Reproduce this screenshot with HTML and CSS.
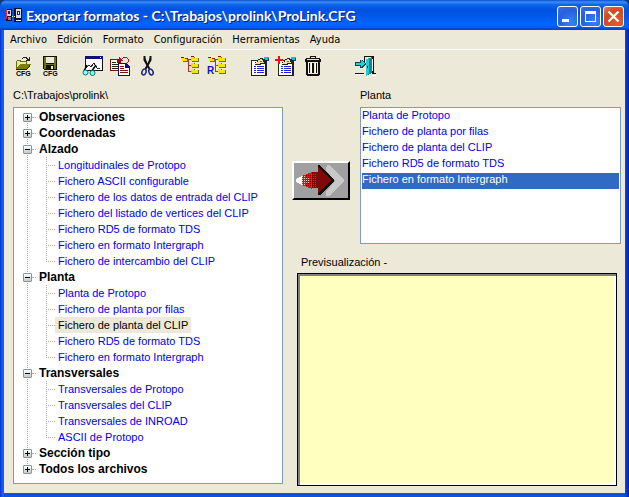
FILE: index.html
```html
<!DOCTYPE html>
<html lang="es">
<head>
<meta charset="utf-8">
<title>Exportar formatos</title>
<link rel="stylesheet" href="styles.css">
</head>
<body>
<div class="window">
  <header class="titlebar">
    <svg class="app-icon" width="16" height="16" viewBox="0 0 16 16" shape-rendering="crispEdges" aria-hidden="true">
      <path fill="#101030" d="M0 1h6v12H0zM8 0h8v14H8z"/><path fill="#d8d8e0" d="M1 2h4v6H1zM10 1h5v9h-5z"/><path fill="#20205c" d="M2 3h2v3H2zM11 3h3v4h-3z"/><path fill="#888" d="M2 9h3v3H2z"/><path fill="#f22" d="M0 1h1v10H0z"/><path fill="#fff" d="M6 8h1v1H6zM8 8h1v1H8zM10 12h5v1h-5zM12 4h1v2h-1z"/>
    </svg>
    <h1 class="title">Exportar formatos - C:\Trabajos\prolink\ProLink.CFG</h1>
    <div class="window-buttons">
      <button class="window-button" type="button" aria-label="Minimizar"><svg width="19" height="19" viewBox="0 0 19 19"><path fill="#fff" d="M4 12h7v3H4z"/></svg></button>
      <button class="window-button" type="button" aria-label="Maximizar"><svg width="19" height="19" viewBox="0 0 19 19"><path fill="#fff" fill-rule="evenodd" d="M4 4h11v11H4zM5 7v7h9V7z"/></svg></button>
      <button class="window-button window-button-close" type="button" aria-label="Cerrar"><svg width="19" height="19" viewBox="0 0 19 19"><path stroke="#fff" stroke-width="2.2" d="M4.500 4.500l10 10M14.500 4.500l-10 10"/></svg></button>
    </div>
  </header>

  <nav class="menubar">
    <button type="button">Archivo</button><button type="button">Edición</button><button type="button">Formato</button><button type="button">Configuración</button><button type="button">Herramientas</button><button type="button">Ayuda</button>
  </nav>

  <div class="toolbar">
    <div class="tool-group">
      <button class="tool" type="button" aria-label="Abrir configuración"><svg width="27" height="22" viewBox="0 0 27 22" shape-rendering="crispEdges">
        <path fill="#6b6b10" d="M6 6h1V5h4v1h6v3H6z"/><path fill="#e8e8a0" d="M7 6h3v1h6v2h-5l-4 4z"/><path fill="#6b6b10" d="M6 6h1v8H6z"/><path fill="#7c7c10" d="M10 9h11l-4 5H6z"/><path fill="#222200" d="M6 14h11v1H6zM17 13h1v1h-1zM18 12h1v1h-1zM19 10h1v2h-1z"/><path fill="#222" d="M12 3h1V2h4v1h1v1h1V2h1v4h-4V5h1V4h-1V3h-3v1h-1z"/>
        <text class="icon-text" x="6" y="21">CFG</text></svg></button>
      <button class="tool" type="button" aria-label="Guardar configuración"><svg width="27" height="22" viewBox="0 0 27 22" shape-rendering="crispEdges">
        <path fill="#111100" d="M6 1h14v14H7l-1-1z"/><path fill="#6f6f18" d="M7 2h2v7h8V2h2v12H7z"/><path fill="#ece9d8" d="M9 2h8v6H9z"/><path fill="#111" d="M9 10h8v4H9z"/><path fill="#ece9d8" d="M14 11h2v3h-2z"/>
        <text class="icon-text" x="6" y="21">CFG</text></svg></button>
    </div>
    <div class="tool-group">
      <button class="tool" type="button" aria-label="Previsualizar"><svg width="27" height="22" viewBox="0 0 27 22" shape-rendering="crispEdges">
        <path fill="#111" d="M5 1h18v15H5z"/><path fill="#fff" d="M6 4h16v11H6z"/><path fill="#10107c" d="M5 1h18v3H5z"/><path fill="#fff" d="M20 2h1v1h-1z"/><path fill="none" stroke="#222" d="M6 13l3-3 2 2 3-4 3 5 3 1"/><g shape-rendering="auto"><path fill="none" stroke="#000" stroke-width="1.500" d="M4 16l3-6M11 17l5-7"/><circle cx="5.500" cy="17.500" r="2.500" fill="#8ff" stroke="#087878"/><circle cx="12.500" cy="18" r="2.500" fill="#8ff" stroke="#087878"/></g></svg></button>
      <button class="tool" type="button" aria-label="Copiar"><svg width="27" height="22" viewBox="0 0 27 22" shape-rendering="crispEdges">
        <path fill="#801010" d="M3 4h8l3 3v9H3z"/><path fill="#fff" d="M4 5h6v3h3v7H4z"/><path fill="#222" d="M5 7h4v1H5zM5 9h6v1H5zM5 11h6v1H5zM5 13h6v1H5z"/><path fill="#10107c" d="M11 8h8l4 4v9H11z"/><path fill="#fff" d="M12 9h6v4h4v7H12z"/><path fill="#801010" d="M13 11h4v1h-4zM13 13h4v1h-4zM13 15h8v1h-8zM13 17h8v1h-8z"/><path fill="#10107c" d="M18 9h1v3h3v1h-4z"/><path fill="#a01818" d="M12 2h1v1h1v1h1V3h1V2h4v1h1v1h1v3h-1v1h-1V7h1V4h-1V3h-4v1h-1v1h1v1h-4z"/></svg></button>
      <button class="tool" type="button" aria-label="Cortar"><svg width="27" height="22" viewBox="0 0 27 22">
        <path stroke="#111" stroke-width="2" d="M10.500 1v4l5 9M16.500 1v4l-5 9"/><g fill="none" stroke="#23238c" stroke-width="1.500"><ellipse cx="10" cy="17" rx="2" ry="3" transform="rotate(20 10 17)"/><ellipse cx="17" cy="17" rx="2" ry="3" transform="rotate(-25 17 17)"/></g></svg></button>
    </div>
    <div class="tool-group">
      <button class="tool" type="button" aria-label="Árbol"><svg width="27" height="22" viewBox="0 0 27 22" shape-rendering="crispEdges">
        <g id="branches"><path fill="#e02020" d="M9 4h6v1H9zM11 4h1v13h-1zM11 10h4v1h-4zM11 16h4v1h-4z"/><path fill="#6c6c40" d="M15 2h3v1h4v4h-7zM15 8h3v1h4v4h-7zM15 14h3v1h4v4h-7zM5 3h4v1h2v3H6V6H5z"/><path fill="#f4e410" d="M14 2h3v1h4v3h-7zM14 8h3v1h4v3h-7zM14 14h3v1h4v3h-7zM5 3h3v1h2v2H5z"/><path fill="#802000" d="M4 2h3v1H4zM8 3h3v1H8zM14 1h3v1h-3z"/></g></svg></button>
      <button class="tool" type="button" aria-label="Renombrar árbol"><svg width="27" height="22" viewBox="0 0 27 22" shape-rendering="crispEdges"><use href="#branches"/><text class="icon-letter" x="3" y="19">R</text></svg></button>
    </div>
    <div class="tool-group">
      <button class="tool" type="button" aria-label="Propiedades"><svg width="27" height="22" viewBox="0 0 27 22" shape-rendering="crispEdges">
        <g id="sheet"><path fill="#222" d="M4 5h16v16H4z"/><path fill="#fff" d="M5 6h13v14H5z"/><path fill="#2020e0" d="M7 11h2v1H7zM10 11h7v1h-7zM7 13h2v1H7zM10 13h7v1h-7zM7 15h2v1H7zM10 15h7v1h-7zM7 17h2v1H7zM10 17h7v1h-7z"/><path fill="#222" d="M8 7h2V6h1V4h2V3h3v1h2v1h2v3h-2v1h-4v1H8z"/><path fill="#e8e0a0" d="M9 7h2V5h2V4h2v1h1v2h1v1h-4v1H9z"/><path fill="#fff" d="M6 8h3v1H6zM14 5h1v2h-1z"/><path fill="#707050" d="M13 6h2v1h-2z"/><path fill="#20b8d8" d="M17 2h5v3h-4z"/><path fill="#1040a0" d="M21 3h1v3h-2V5h1z"/></g></svg></button>
      <button class="tool" type="button" aria-label="Nuevo formato"><svg width="27" height="22" viewBox="0 0 27 22" shape-rendering="crispEdges"><use href="#sheet"/><path fill="#f01010" d="M4 1h2v3h3v2H6v3H4V6H1V4h3z"/></svg></button>
      <button class="tool" type="button" aria-label="Eliminar"><svg width="27" height="22" viewBox="0 0 27 22" shape-rendering="crispEdges">
        <path fill="#111" d="M9 1h6v2h4v1h1v3h-1v13h-1v1H6v-1H5V7H4V4h1V3h4z"/><path fill="#ece9d8" d="M10 2h4v1h-4zM6 4h12v1H6zM7 7h10v12H7z"/><path fill="#111" d="M8 8h1v10H8zM11 8h2v10h-2zM15 8h1v10h-1z"/><path fill="#fff" d="M7 8h1v10H7zM10 8h1v10h-1zM14 8h1v10h-1z"/></svg></button>
    </div>
    <div class="tool-group tool-group-exit">
      <button class="tool" type="button" aria-label="Salir"><svg width="27" height="22" viewBox="0 0 27 22" shape-rendering="crispEdges">
        <path fill="#111" d="M12 1h10v18h-2V2h-7v5h-1zM3 18h9v1H3zM20 18h4v1h-4z"/><path fill="#fff" d="M4 19h8v1H4zM20 20h4v1h-4zM20 4h1v12h-1z"/><path fill="#0b8890" d="M14 4l6-2v16l-6 3z"/><path fill="#28c8d0" d="M14 4l3-1v16l-3 2z"/><path fill="#111" d="M15 11h1v2h-1z"/><path fill="#064850" d="M3 7h5V5h2l4 4-4 4H8v-2H3z"/><path fill="#28d0d8" d="M4 8h5V5l4 4-4 3v-2H4z"/></svg></button>
    </div>
  </div>

  <main class="content">
    <section class="source">
      <h2 class="caption" id="path">C:\Trabajos\prolink\</h2>
      <ul class="tree" aria-labelledby="path">
        <li class="branch"><div class="node"><button class="toggle toggle-closed" type="button" aria-label="Expandir Observaciones"></button><span class="branch-name">Observaciones</span></div></li>
        <li class="branch"><div class="node"><button class="toggle toggle-closed" type="button" aria-label="Expandir Coordenadas"></button><span class="branch-name">Coordenadas</span></div></li>
        <li class="branch"><div class="node"><button class="toggle" type="button" aria-label="Contraer Alzado"></button><span class="branch-name">Alzado</span></div>
          <ul class="leaves">
            <li><span class="leaf">Longitudinales de Protopo</span></li>
            <li><span class="leaf">Fichero ASCII configurable</span></li>
            <li><span class="leaf">Fichero de los datos de entrada del CLIP</span></li>
            <li><span class="leaf">Fichero del listado de vertices del CLIP</span></li>
            <li><span class="leaf">Fichero RD5 de formato TDS</span></li>
            <li><span class="leaf">Fichero en formato Intergraph</span></li>
            <li><span class="leaf">Fichero de intercambio del CLIP</span></li>
          </ul></li>
        <li class="branch"><div class="node"><button class="toggle" type="button" aria-label="Contraer Planta"></button><span class="branch-name">Planta</span></div>
          <ul class="leaves">
            <li><span class="leaf">Planta de Protopo</span></li>
            <li><span class="leaf">Fichero de planta por filas</span></li>
            <li><span class="leaf leaf-selected">Fichero de planta del CLIP</span></li>
            <li><span class="leaf">Fichero RD5 de formato TDS</span></li>
            <li><span class="leaf">Fichero en formato Intergraph</span></li>
          </ul></li>
        <li class="branch"><div class="node"><button class="toggle" type="button" aria-label="Contraer Transversales"></button><span class="branch-name">Transversales</span></div>
          <ul class="leaves">
            <li><span class="leaf">Transversales de Protopo</span></li>
            <li><span class="leaf">Transversales del CLIP</span></li>
            <li><span class="leaf">Transversales de INROAD</span></li>
            <li><span class="leaf">ASCII de Protopo</span></li>
          </ul></li>
        <li class="branch"><div class="node"><button class="toggle toggle-closed" type="button" aria-label="Expandir Sección tipo"></button><span class="branch-name">Sección tipo</span></div></li>
        <li class="branch"><div class="node"><button class="toggle toggle-closed" type="button" aria-label="Expandir Todos los archivos"></button><span class="branch-name">Todos los archivos</span></div></li>
      </ul>
    </section>

    <section class="target">
      <div class="transfer">
        <button class="send" type="button" aria-label="Exportar">
          <svg width="54" height="35" viewBox="0 0 54 35" shape-rendering="crispEdges">
            <path fill="#c8c8c8" d="M33 2h3l14 15v1L36 33h-4v-4l9-11L32 7z"/>
            <path fill="#111" d="M24 2h2l14 15v1L26 32h-2z"/>
            <path fill="#800808" d="M18 9h6V4l13 13v1L24 30v-5h-6z"/>
            <path fill="#d01818" d="M8 13l10-4v17L8 22z"/>
            <path fill="#fff" d="M2 16l6-3v9l-6-3z"/>
            <path stroke="#f8c0c0" stroke-dasharray="1 1" d="M8 13.500h4M8 15.500h7M8 17.500h8M8 19.500h7M8 21.500h4"/>
            <path stroke="#e02828" stroke-dasharray="1 1" d="M17 11.500h5M17 13.500h6M17 15.500h6M17 17.500h6M17 19.500h6M17 21.500h6M17 23.500h5"/>
            <path stroke="#700808" stroke-dasharray="1 1" d="M12 12.500h6M12 14.500h6M12 16.500h6M12 18.500h6M12 20.500h6M12 22.500h6"/>
          </svg>
        </button>
        <div class="formats">
          <label class="caption" for="formats">Planta</label>
          <select class="list" id="formats" size="8">
            <option>Planta de Protopo</option>
            <option>Fichero de planta por filas</option>
            <option>Fichero de planta del CLIP</option>
            <option>Fichero RD5 de formato TDS</option>
            <option selected>Fichero en formato Intergraph</option>
          </select>
        </div>
      </div>
      <div class="preview">
        <label class="preview-label" for="preview">Previsualización -</label>
        <textarea class="preview-box" id="preview" readonly></textarea>
      </div>
    </section>
  </main>
</div>
</body>
</html>
```

FILE: styles.css
```css
* {
  box-sizing: border-box;
}

body {
  margin: 0;
  background: #123a6c;
  font: 11px/16px "Liberation Sans", Arial, sans-serif;
  color: #000;
}

h1, h2, ul {
  margin: 0;
  padding: 0;
  font: inherit;
  list-style: none;
}

button, select, textarea {
  font: inherit;
  color: inherit;
  margin: 0;
  padding: 0;
  border: 0;
  background: none;
}

svg {
  display: block;
}

.window {
  display: flex;
  flex-direction: column;
  min-height: 100vh;
  padding: 0 4px 4px;
  border-radius: 7px 7px 0 0;
  overflow: hidden;
  background: #ece9d8;
  background:
    linear-gradient(#ece9d8, #ece9d8) content-box,
    linear-gradient(to right, #0831d9, #166aee 3px, #0855dd 4px, #0855dd calc(100% - 4px), #0140dc calc(100% - 3px), #001da0);
}

.titlebar {
  display: flex;
  align-items: center;
  height: 30px;
  margin: 0 -4px;
  padding: 2px 5px 0 6px;
  background: linear-gradient(#0b4dcc, #3a8cf8 2px, #0a62ea 5px, #0053e0 10px, #0058ea 16px, #0066ff 24px, #0060f4 27px, #003dc0 30px);
}

.app-icon {
  margin-right: 4px;
}

.title {
  flex: 1;
  font: bold 14px/20px Lato, sans-serif;
  color: #fff;
  text-shadow: 1px 1px #0a1883;
  white-space: nowrap;
  overflow: hidden;
}

.window-buttons {
  display: flex;
  gap: 2px;
}

.window-button {
  width: 21px;
  height: 21px;
  border: 1px solid #fff;
  border-radius: 3px;
  background: radial-gradient(circle at 70% 80%, #3a80f8, #2560e0 60%, #3c70e0);
}

.window-button-close {
  background: radial-gradient(circle at 70% 80%, #e85a30, #d8461e 60%, #e08060);
}

.menubar {
  display: flex;
  gap: 10px;
  height: 20px;
  padding: 0 6px;
  border-bottom: 1px solid #fff;
  font: 11px/18px "DejaVu Sans Condensed", "DejaVu Sans", sans-serif;
}

.toolbar {
  display: flex;
  gap: 16px;
  height: 32px;
  padding: 5px 6px;
}

.tool-group {
  display: flex;
}

.tool-group-exit {
  margin-left: 8px;
}

.icon-text {
  font: bold 7px "Liberation Sans", Arial, sans-serif;
}

.icon-letter {
  font: bold 10px "Liberation Sans", Arial, sans-serif;
  fill: #1010d0;
}

.content {
  display: grid;
  flex: 1;
  grid-template-columns: minmax(0, 270fr) minmax(0, 329fr);
  gap: 9px;
  padding: 5px 4px 7px 9px;
}

.source {
  display: flex;
  flex-direction: column;
  padding-bottom: 2px;
}

.caption {
  height: 20px;
}

.tree {
  flex: 1;
  padding: 1px 9px;
  border: 1px solid #7f9db9;
  background: #fff;
}

.branch {
  background: repeating-linear-gradient(#aaa 0 1px, transparent 1px 2px) 4px 0 / 1px 100% no-repeat;
}

.branch:first-child {
  background-position: 4px 8px;
}

.branch:last-child {
  background-size: 1px 8px;
}

.node {
  display: flex;
  align-items: center;
  height: 16px;
}

.node::after {
  content: "";
  order: 1;
  width: 4px;
  border-top: 1px dotted #aaa;
}

.toggle {
  width: 9px;
  height: 9px;
  border: 1px solid #7898b5;
  border-radius: 1px;
  background:
    linear-gradient(#000, #000) center / 5px 1px no-repeat,
    linear-gradient(#fff, #d0c8b8);
}

.toggle-closed {
  background:
    linear-gradient(#000, #000) center / 5px 1px no-repeat,
    linear-gradient(#000, #000) center / 1px 5px no-repeat,
    linear-gradient(#fff, #d0c8b8);
}

.branch-name {
  order: 2;
  margin-left: 3px;
  font: bold 12px/16px "Liberation Sans", Arial, sans-serif;
}

.leaves {
  padding-left: 23px;
  color: #00e;
}

.leaves li {
  display: flex;
  align-items: center;
  height: 16px;
  background: repeating-linear-gradient(#aaa 0 1px, transparent 1px 2px) 0 0 / 1px 100% no-repeat;
}

.leaves li:last-child {
  background-size: 1px 8px;
}

.leaves li::before {
  content: "";
  width: 9px;
  border-top: 1px dotted #aaa;
}

.leaf {
  padding: 0 3px;
  white-space: nowrap;
}

.leaf-selected {
  background: #ece9d8;
  color: #000;
}

.target {
  display: flex;
  flex-direction: column;
  gap: 10px;
}

.transfer {
  display: flex;
  gap: 10px;
}

.send {
  align-self: center;
  width: 58px;
  height: 39px;
  margin-top: 30px;
  border: 2px solid;
  border-color: #fff #000 #000 #fff;
  background: #a0a0a0;
}

.formats {
  display: flex;
  flex: 1;
  flex-direction: column;
}

.list {
  height: 137px;
  padding: 1px;
  border: 1px solid #7f9db9;
  border-radius: 0;
  outline: 0;
  background: #fff;
  color: #00e;
  overflow: hidden;
}

.list option {
  height: 16px;
  min-height: 16px;
  padding: 0;
}

.list option:checked {
  background: linear-gradient(#316ac5, #316ac5);
  -webkit-text-fill-color: #fff;
}

.preview {
  display: flex;
  flex: 1;
  flex-direction: column;
  margin: 0 4px 0 5px;
}

.preview-label {
  height: 19px;
  padding-left: 4px;
}

.preview-box {
  flex: 1;
  width: 100%;
  border: 1px solid #000;
  border-radius: 0;
  outline: 0;
  background: #ffffc0;
  box-shadow: inset 2px 2px #808080, inset -2px -2px #fff;
  resize: none;
}
```
